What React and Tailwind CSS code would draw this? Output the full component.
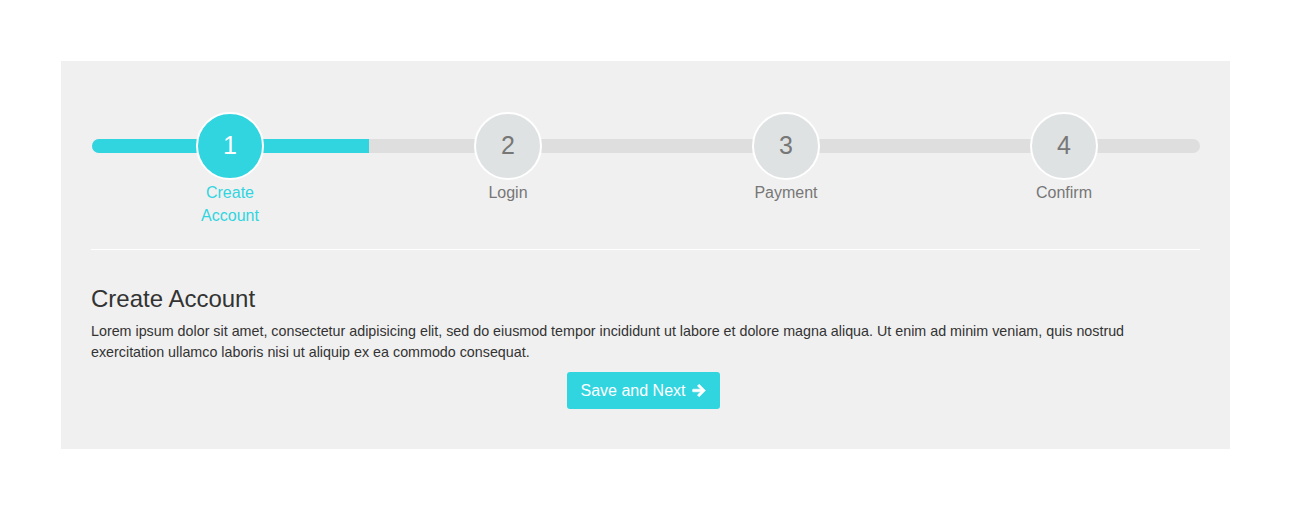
import React from "react";

const steps = [
  { n: 1, label: ["Create", "Account"], active: true },
  { n: 2, label: ["Login"] },
  { n: 3, label: ["Payment"] },
  { n: 4, label: ["Confirm"] },
];

function Arrow() {
  return (
    <svg width="14" height="15" viewBox="0 0 14 15" className="block">
      <path
        d="M7.2 1.2 L13.4 7.5 L7.2 13.8 L5.4 12 L8.7 8.8 H1.2 Q0.6 8.8 0.6 8.2 V6.8 Q0.6 6.2 1.2 6.2 H8.7 L5.4 3 Z"
        fill="white"
        stroke="white"
        strokeWidth="0.6"
        strokeLinejoin="round"
      />
    </svg>
  );
}

export default function App() {
  return (
    <div className="w-[1289px] h-[516px] bg-white pt-[61px]" style={{ fontFamily: '"Liberation Sans", Arial, sans-serif' }}>
      <div className="ml-[61px] w-[1169px] bg-[#f0f0f0] px-[30px] pt-[51px] pb-[40px]">
        <div className="relative">
          <div className="absolute left-px right-0 top-[27px] h-[14px] rounded-full bg-[#dedede] overflow-hidden">
            <div className="h-full w-1/4 bg-[#31d5e0]" />
          </div>
          <div className="relative grid grid-cols-4 w-[1112px]">
            {steps.map((s) => (
              <div key={s.n} className="flex flex-col items-center">
                <div
                  className={`w-[68px] h-[68px] rounded-full border-2 border-white flex items-center justify-center text-[25px] ${
                    s.active ? "bg-[#31d5e0] text-white" : "bg-[#dfe2e3] text-[#777]"
                  }`}
                >
                  {s.n}
                </div>
                <div className={`pt-[1px] text-[16px] leading-[23px] text-center ${s.active ? "text-[#31d5e0]" : "text-[#777]"}`}>
                  {s.label.map((l) => (
                    <div key={l}>{l}</div>
                  ))}
                </div>
              </div>
            ))}
          </div>
        </div>
        <div className="mt-[22px] border-t border-white" />
        <h3 className="mt-[36px] text-[24px] leading-[26px] text-[#333]">Create Account</h3>
        <p className="mt-[9px] text-[14.3px] leading-[21px] text-[#333]">
          Lorem ipsum dolor sit amet, consectetur adipisicing elit, sed do eiusmod tempor incididunt ut labore et dolore magna aliqua. Ut enim ad minim veniam, quis nostrud exercitation ullamco laboris nisi ut aliquip ex ea commodo consequat.
        </p>
        <div className="mt-[9px] flex justify-center">
          <button className="h-[37px] px-[14px] rounded-[3px] bg-[#31d5e0] text-white text-[16px] flex items-center gap-[7px] -translate-x-[2px]">
            Save and Next <Arrow />
          </button>
        </div>
      </div>
    </div>
  );
}
